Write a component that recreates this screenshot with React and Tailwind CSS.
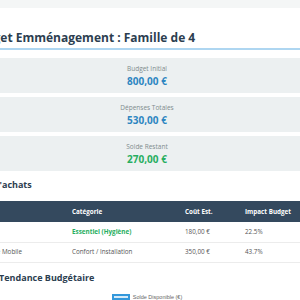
const STATS = [
  { label: 'Budget Initial', value: '800,00 €', color: 'text-[#2e86c1]' },
  { label: 'Dépenses Totales', value: '530,00 €', color: 'text-[#2e86c1]' },
  { label: 'Solde Restant', value: '270,00 €', color: 'text-[#27ae60]' },
];

const ROWS = [
  { name: 'Savon', cat: 'Essentiel (Hygiène)', cost: '180,00 €', impact: '22.5%', essential: true },
  { name: 'Étagère Mobile', cat: 'Confort / Installation', cost: '350,00 €', impact: '43.7%', essential: false },
];

export default function App() {
  return (
    <div className="w-[300px] h-[300px] overflow-hidden bg-[#f4f6f6] font-['Open_Sans',sans-serif]">
      <div className="ml-[-50px] w-[394px] mt-2 bg-white px-5 pt-5">
        {/* Title */}
        <h1 className="text-[12px] leading-[19px] font-bold text-[#2c3e50] border-b-2 border-[#aed6f1] pb-[1px]">
          Budget Emménagement : Famille de 4
        </h1>

        {/* Stats */}
        <div className="mt-2 flex flex-col gap-[4px]">
          {STATS.map((s) => (
            <div key={s.label} className="h-[35px] bg-[#ecf0f1] flex flex-col items-center justify-center">
              <div className="text-[6.5px] leading-[10px] text-[#7f8c8d]">{s.label}</div>
              <div className={`text-[10px] leading-[14px] font-bold ${s.color}`}>{s.value}</div>
            </div>
          ))}
        </div>

        {/* Purchases */}
        <h2 className="mt-[7px] text-[9px] leading-[14px] font-bold text-[#2c3e50] mb-[9px]">
          Liste d'achats
        </h2>
        <table className="w-full border-collapse text-[6.3px] text-left">
          <thead>
            <tr className="bg-[#34495e] text-white h-[21px]">
              <th className="w-[94px] px-2 font-bold">Article</th>
              <th className="w-[113px] px-2 font-bold">Catégorie</th>
              <th className="w-[60px] px-2 font-bold">Coût Est.</th>
              <th className="px-2 font-bold">Impact Budget</th>
            </tr>
          </thead>
          <tbody className="text-[#555]">
            {ROWS.map((r) => (
              <tr key={r.name} className="h-[20px] border-b border-[#ececec]">
                <td className="px-2">{r.name}</td>
                <td className={`px-2 ${r.essential ? 'text-[#27ae60] font-bold' : ''}`}>{r.cat}</td>
                <td className="px-2">{r.cost}</td>
                <td className="px-2">{r.impact}</td>
              </tr>
            ))}
          </tbody>
        </table>

        {/* Chart */}
        <h2 className="mt-[8px] text-[9px] leading-[14px] font-bold text-[#2c3e50]">
          Suivi - Tendance Budgétaire
        </h2>
        <div className="mt-[9px] flex items-center justify-center gap-[3px]">
          <span className="w-[18px] h-[6px] border-2 border-[#3498db] bg-[#d6eaf8]" />
          <span className="text-[5.5px] leading-[6px] text-[#666] font-['Liberation_Sans',sans-serif]">Solde Disponible (€)</span>
        </div>
      </div>
    </div>
  );
}
